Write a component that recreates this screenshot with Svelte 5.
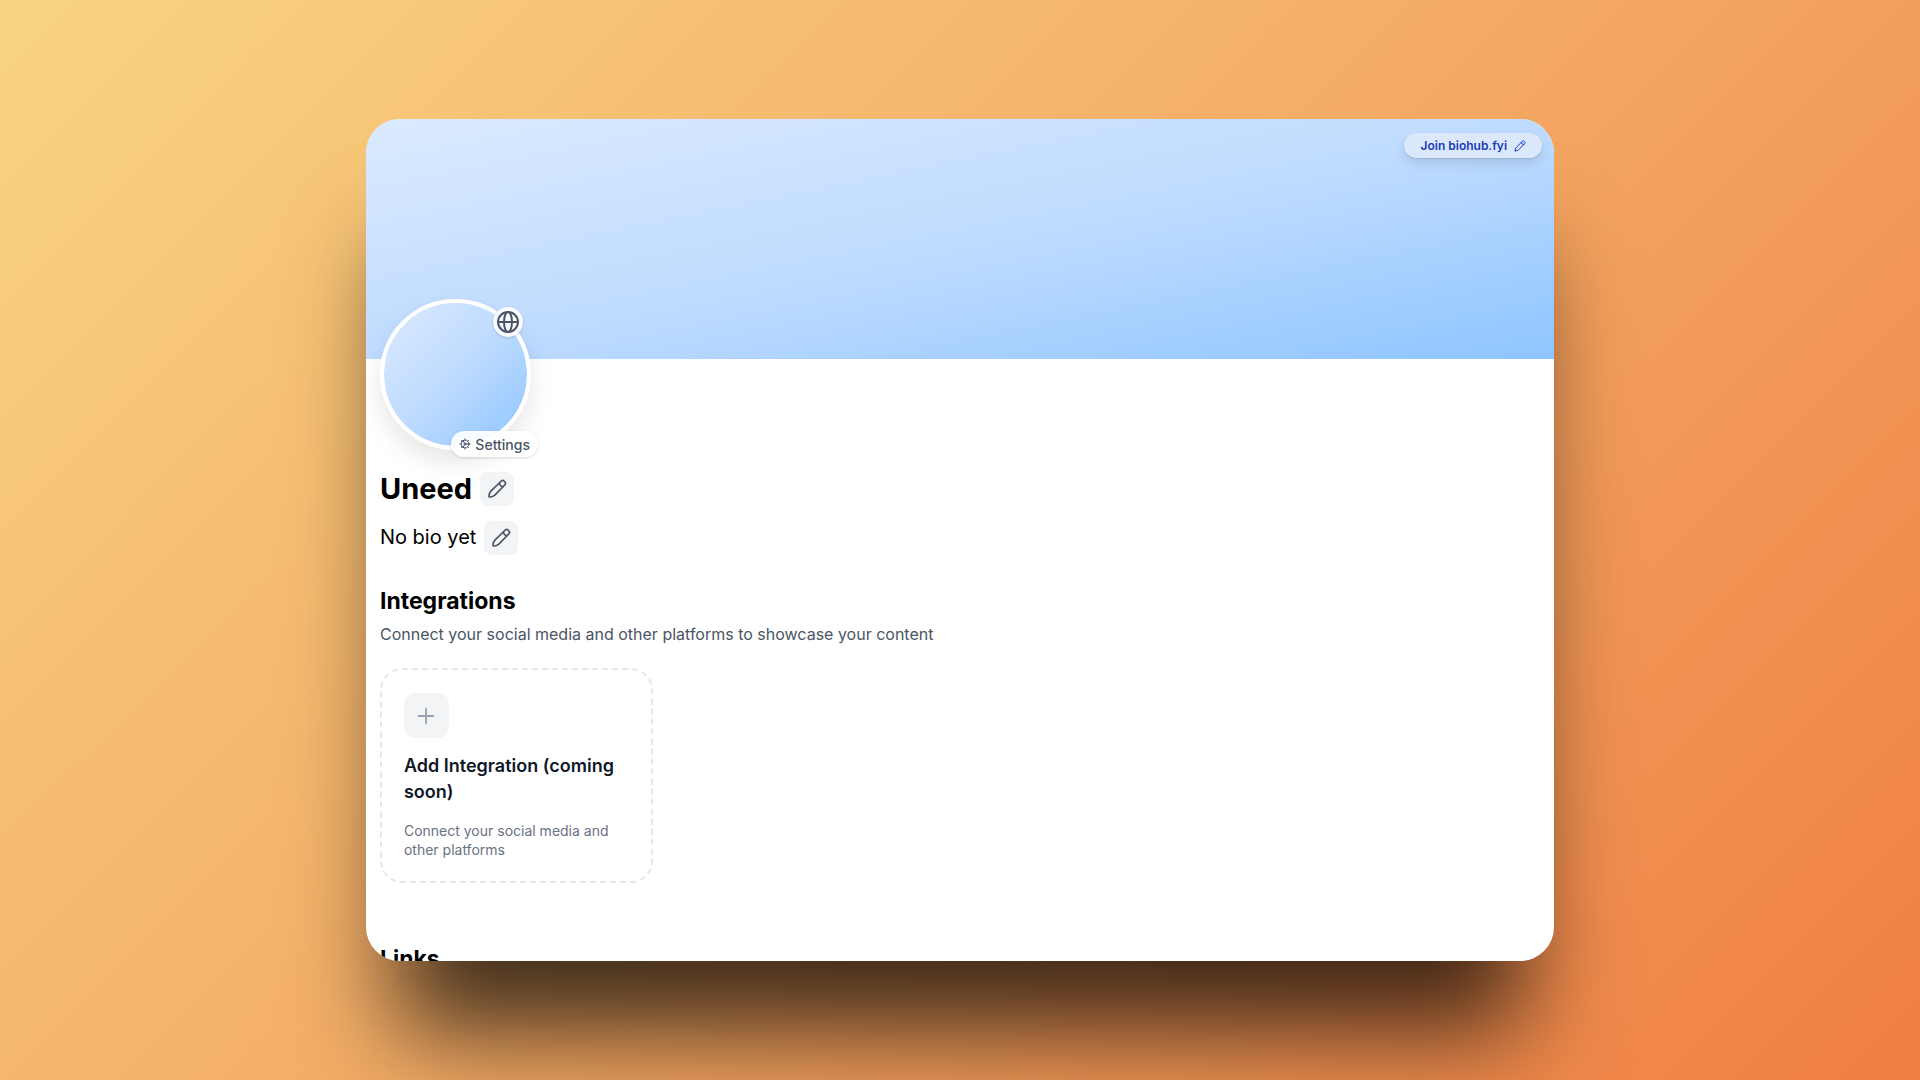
<script>
  const profile = { name: 'Uneed', bio: 'No bio yet' };

  const integrations = [
    {
      title: 'Add Integration (coming soon)',
      text: 'Connect your social media and other platforms'
    }
  ];
</script>

{#snippet pencil()}
  <svg viewBox="0 0 24 24" class="icon" aria-hidden="true">
    <path d="M2.500 21.500c-.3-2.600.4-5 2.200-6.900L16.800 2.700a2.800 2.800 0 0 1 3.900 0l.6.600a2.800 2.800 0 0 1 0 3.900L9.400 19.300c-1.900 1.800-4.300 2.500-6.900 2.200z" />
    <path d="M15 4.500c-.2 2.700 1.800 4.700 4.500 4.500" />
  </svg>
{/snippet}

<main class="stage">
  <div class="window">
    <header class="cover">
      <a class="join" href="#join">
        Join biohub.fyi
        {@render pencil()}
      </a>
    </header>

    <div class="content">
      <div class="avatar">
        <button class="globe" aria-label="Visibility">
          <svg viewBox="0 0 24 24" class="icon" aria-hidden="true">
            <circle cx="12" cy="12" r="10" />
            <ellipse cx="12" cy="12" rx="4" ry="10" />
            <path d="M2 12h20" />
          </svg>
        </button>
        <button class="settings">
          <svg viewBox="0 0 24 24" class="icon" aria-hidden="true">
            <circle cx="12" cy="12" r="8" />
            <circle cx="12" cy="12" r="2" />
            <path d="M12 2v2M12 20v2M2 12h2M20 12h2M5 5l1.500 1.500M17.500 17.500L19 19M5 19l1.500-1.500M17.500 6.500L19 5M14 12h6M11 10.300L8 5.100M11 13.700l-3 5.200" />
          </svg>
          Settings
        </button>
      </div>

      <div class="row">
        <h1>{profile.name}</h1>
        <button class="edit" aria-label="Edit name">{@render pencil()}</button>
      </div>
      <div class="row bio">
        <p>{profile.bio}</p>
        <button class="edit" aria-label="Edit bio">{@render pencil()}</button>
      </div>

      <section>
        <h2>Integrations</h2>
        <p class="lead">Connect your social media and other platforms to showcase your content</p>
        <div class="cards">
          {#each integrations as item (item.title)}
            <button class="card">
              <span class="plus">
                <svg viewBox="0 0 24 24" class="icon" aria-hidden="true">
                  <path d="M12 4v16M4 12h16" />
                </svg>
              </span>
              <span class="card-title">{item.title}</span>
              <span class="card-text">{item.text}</span>
            </button>
          {/each}
        </div>
      </section>

      <section>
        <h2>Links</h2>
      </section>
    </div>
  </div>
</main>

<style>
  :global(body) {
    margin: 0;
  }

  .stage {
    box-sizing: border-box;
    height: 100vh;
    padding: 119px 19.06%;
    display: flex;
    overflow: hidden;
    background: linear-gradient(135deg, #f8d481, #f4ab65 50%, #ef7e42);
    font-family: Inter, 'Open Sans', sans-serif;
    color: #000;
  }

  .window {
    flex: 1;
    min-width: 0;
    overflow: hidden;
    border-radius: 34px;
    background: #fff;
    box-shadow: 0 100px 100px -30px rgba(0, 0, 0, 0.74);
  }

  h1,
  h2,
  p {
    margin: 0;
  }

  button {
    padding: 0;
    border: none;
    font: inherit;
    color: inherit;
    cursor: pointer;
  }

  .icon {
    display: block;
    fill: none;
    stroke: currentColor;
    stroke-width: 2;
    stroke-linecap: round;
    stroke-linejoin: round;
  }

  .cover {
    box-sizing: border-box;
    height: 240px;
    padding: 14px 12px;
    display: flex;
    justify-content: flex-end;
    align-items: flex-start;
    background: linear-gradient(to bottom right in oklab, #dbeafe, #bedbff 52%, #8ec5ff);
  }

  .join {
    display: flex;
    align-items: center;
    gap: 7px;
    height: 25px;
    padding: 0 16px;
    border-radius: 13px;
    background: #dbe8fc;
    box-shadow: 0 6px 12px rgba(0, 0, 0, 0.1), 0 1px 2px rgba(0, 0, 0, 0.1);
    color: #193cb8;
    font-size: 12px;
    font-weight: 600;
    text-decoration: none;
  }

  .join .icon {
    width: 12px;
    height: 12px;
  }

  .content {
    padding: 0 14px;
  }

  .avatar {
    position: relative;
    box-sizing: border-box;
    width: 151px;
    height: 151px;
    margin-top: -60px;
    border: 4px solid #fff;
    border-radius: 50%;
    background: linear-gradient(to bottom right in oklab, #dbeafe, #bedbff, #8ec5ff) padding-box;
    box-shadow: 0 12px 24px rgba(0, 0, 0, 0.1);
  }

  .globe {
    position: absolute;
    top: 4px;
    right: 4px;
    width: 30px;
    height: 30px;
    display: grid;
    place-items: center;
    border-radius: 50%;
    background: #fafbff;
    box-shadow: 0 1px 3px rgba(0, 0, 0, 0.15);
    color: #4a5565;
  }

  .globe .icon {
    width: 24px;
    height: 24px;
  }

  .settings {
    position: absolute;
    right: -11px;
    bottom: -11px;
    display: flex;
    align-items: center;
    gap: 4px;
    height: 26px;
    padding: 0 8px;
    border-radius: 13px;
    background: rgba(255, 255, 255, 0.92);
    box-shadow: 0 1px 3px rgba(0, 0, 0, 0.15);
    color: #4a5565;
    font-size: 14px;
    font-weight: 500;
  }

  .settings .icon {
    width: 12px;
    height: 12px;
  }

  .row {
    display: flex;
    align-items: center;
    gap: 8px;
    margin-top: 22px;
  }

  .row.bio {
    margin-top: 15px;
  }

  h1 {
    font-size: 29px;
    line-height: 34px;
    font-weight: 700;
  }

  .bio p {
    padding-bottom: 2px;
    font-size: 20px;
    line-height: 30px;
  }

  .edit {
    width: 34px;
    height: 34px;
    display: grid;
    place-items: center;
    border-radius: 8px;
    background: #f3f4f6;
    color: #4a5565;
  }

  .edit .icon {
    width: 20px;
    height: 20px;
  }

  section {
    margin-top: 30px;
  }

  section + section {
    margin-top: 60px;
  }

  h2 {
    font-size: 23px;
    line-height: 32px;
    font-weight: 700;
  }

  .lead {
    margin-top: 5px;
    font-size: 16px;
    line-height: 24px;
    color: #4a5565;
  }

  .cards {
    display: grid;
    grid-template-columns: repeat(auto-fill, 273px);
    gap: 16px;
    margin-top: 22px;
  }

  .card {
    display: flex;
    flex-direction: column;
    align-items: flex-start;
    padding: 23px 22px 22px;
    border: 2px dashed #e5e7eb;
    border-radius: 22px;
    background: #fff;
    text-align: left;
  }

  .plus {
    width: 45px;
    height: 45px;
    display: grid;
    place-items: center;
    border-radius: 11px;
    background: #f3f4f6;
    color: #99a1af;
  }

  .plus .icon {
    width: 22px;
    height: 22px;
  }

  .card-title {
    margin-top: 15px;
    font-size: 18px;
    line-height: 26px;
    font-weight: 600;
    color: #101828;
  }

  .card-text {
    margin-top: 16px;
    font-size: 14px;
    line-height: 19px;
    color: #6a7282;
  }

  @media (max-width: 900px) {
    .stage {
      padding: 24px;
    }
  }
</style>
